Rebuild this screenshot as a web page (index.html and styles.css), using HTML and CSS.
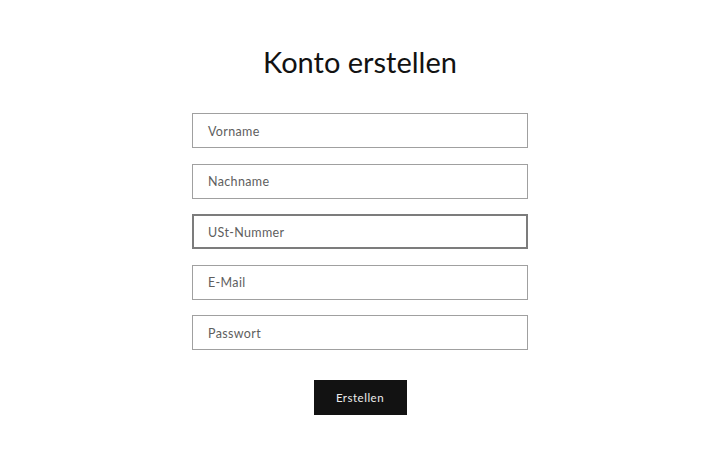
FILE: index.html
```html
<!DOCTYPE html>
<html lang="de">
<head>
<meta charset="utf-8">
<title>Konto erstellen</title>
<link rel="stylesheet" href="styles.css">
</head>
<body>
<main class="page">
  <h1 class="title">Konto erstellen</h1>
  <form class="form">
    <div class="field"><span class="placeholder">Vorname</span></div>
    <div class="field"><span class="placeholder">Nachname</span></div>
    <div class="field field--active"><span class="placeholder">USt-Nummer</span></div>
    <div class="field"><span class="placeholder">E-Mail</span></div>
    <div class="field"><span class="placeholder">Passwort</span></div>
    <button type="button" class="button">Erstellen</button>
  </form>
</main>
</body>
</html>
```

FILE: styles.css
```css
html, body {
  margin: 0;
  padding: 0;
  background: #ffffff;
}
body {
  font-family: "Lato", "Open Sans", sans-serif;
  color: #121212;
}
.page {
  display: flex;
  flex-direction: column;
  align-items: center;
  padding-top: 43px;
}
.title {
  margin: 0;
  font-weight: 400;
  font-size: 29px;
  line-height: 38px;
  letter-spacing: 0;
  color: #121212;
}
.form {
  width: 336px;
  display: flex;
  flex-direction: column;
  margin-top: 32px;
  gap: 15.5px;
}
.field {
  box-sizing: border-box;
  height: 35px;
  border: 1px solid #a0a0a0;
  display: flex;
  align-items: center;
  padding-left: 15px;
  padding-top: 1px;
}
.field--active {
  border: 2px solid #7c7c7c;
  padding-left: 14px;
}
.placeholder {
  font-size: 12.5px;
  letter-spacing: 0.35px;
  color: #5e5e5e;
}
.button {
  align-self: center;
  margin-top: 14.5px;
  width: 93px;
  height: 35px;
  border: 0;
  background: #121212;
  color: #ececec;
  font-family: inherit;
  font-size: 11.5px;
  letter-spacing: 0.5px;
  cursor: pointer;
}
```
